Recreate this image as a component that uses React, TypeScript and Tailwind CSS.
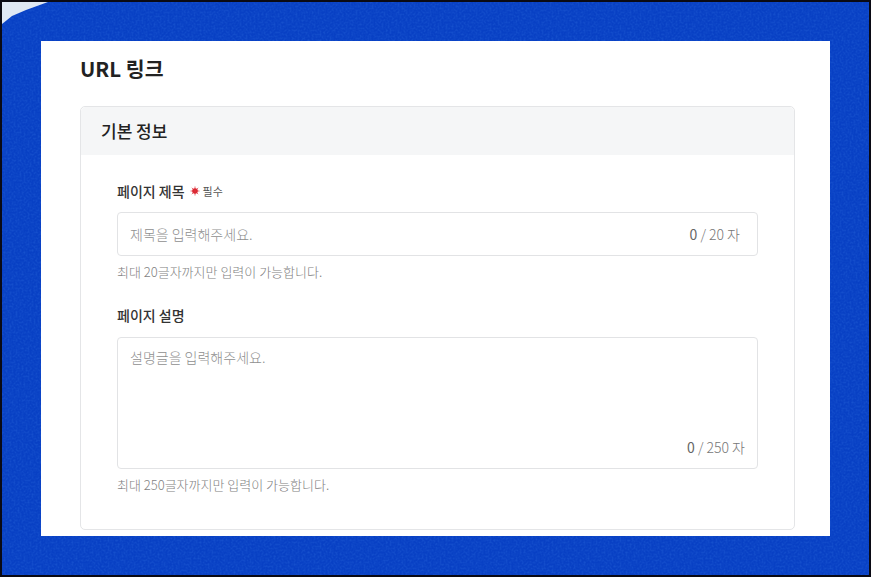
const font = "font-['Noto_Sans_CJK_KR','Noto_Sans',sans-serif]";

// little red burst next to the required label
function RequiredMark() {
  return (
    <svg width="10" height="10" viewBox="0 0 10 10" className="ml-[5px]">
      <circle cx="5" cy="5" r="2.8" fill="#d8202c" />
      <path d="M5 .5v9M.5 5h9M1.8 1.8l6.4 6.4M8.2 1.8 1.8 8.2" stroke="#e0323c" strokeWidth="1" opacity="0.7" />
    </svg>
  );
}

export default function App() {
  return (
    <div className={`relative h-[577px] w-[871px] overflow-hidden border-2 border-[#0a0a14] bg-[#0840c4] p-[39px] ${font}`}>
      {/* paper grain of the backdrop */}
      <svg className="absolute inset-0 h-full w-full" aria-hidden="true">
        <filter id="grain">
          <feTurbulence type="fractalNoise" baseFrequency="0.5" numOctaves="3" seed="4" />
          <feColorMatrix values="0 0 0 0 0.1  0 0 0 0 0.35  0 0 0 0 0.95  0.9 0 0 0 -0.34" />
        </filter>
        <rect width="100%" height="100%" filter="url(#grain)" opacity="0.4" />
      </svg>
      {/* torn corner of the backdrop */}
      <svg className="absolute left-0 top-0" width="52" height="26" viewBox="0 0 52 26">
        <polygon points="0,0 46,0 24,8 10,14 0,22" fill="#dfe8f4" />
      </svg>
      <main className="relative h-[495px] overflow-hidden bg-white pl-[39px] pr-[35px] pt-[11px]">
        <h1 className="mb-[21px] h-[33px] text-[20.5px] font-semibold leading-[33px] text-[#222]">URL 링크</h1>
        <section className="h-[424px] rounded-[5px] border border-[#e4e5e7]">
          <header className="flex h-[48px] items-center rounded-t-[5px] bg-[#f5f6f7] px-[20px]">
            <h2 className="text-[17px] font-medium text-[#222]">기본 정보</h2>
          </header>
          <div className="px-[36px] pt-[27px]">
            <div className="flex h-[18px] items-center">
              <label className="text-[14px] font-medium text-[#333]">페이지 제목</label>
              <RequiredMark />
              <span className="ml-[3px] text-[11px] text-[#555]">필수</span>
            </div>
            <div className="mt-[12px] flex h-[44px] items-center justify-between rounded-[4px] border border-[#e2e3e5] pl-[12px] pr-[17px]">
              <span className="pt-[1px] text-[14px] font-light text-[#8f8f8f]">제목을 입력해주세요.</span>
              <span className="text-[14px] font-light text-[#777]"><span className="font-normal text-[#666]">0</span> / 20 자</span>
            </div>
            <p className="mt-[7px] text-[13px] font-light leading-[18px] text-[#7f7f7f]">최대 20글자까지만 입력이 가능합니다.</p>
            <label className="mt-[25px] block text-[14px] font-medium leading-[18px] text-[#333]">페이지 설명</label>
            <div className="mt-[13px] flex h-[132px] flex-col justify-between rounded-[4px] border border-[#e2e3e5] pb-[12px] pl-[12px] pr-[12px] pt-[10px]">
              <span className="text-[14px] font-light leading-[18px] text-[#8f8f8f]">설명글을 입력해주세요.</span>
              <span className="self-end text-[14px] font-light leading-[18px] text-[#777]"><span className="font-normal text-[#666]">0</span> / 250 자</span>
            </div>
            <p className="mt-[7px] text-[13px] font-light leading-[18px] text-[#7f7f7f]">최대 250글자까지만 입력이 가능합니다.</p>
          </div>
        </section>
      </main>
    </div>
  );
}
